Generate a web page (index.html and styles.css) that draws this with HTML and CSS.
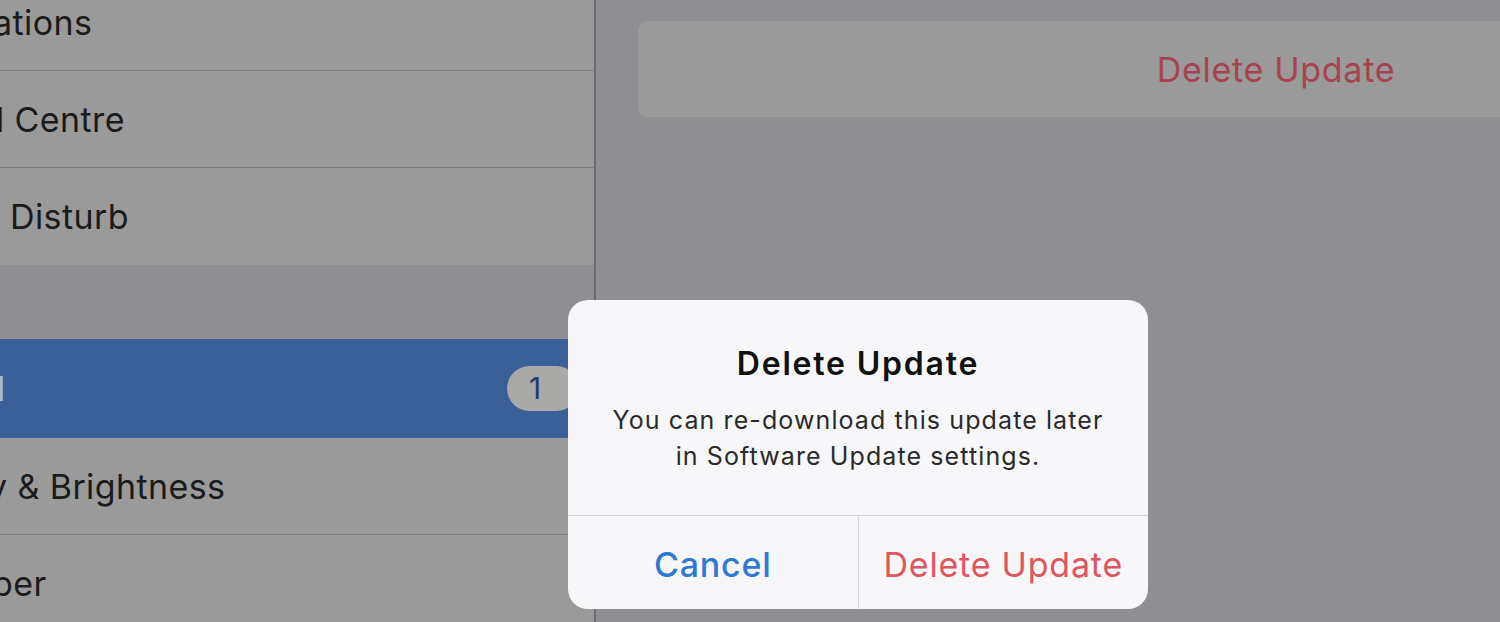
FILE: index.html
```html
<!DOCTYPE html>
<html lang="en">
<head>
    <meta charset="UTF-8">
    <meta name="viewport" content="width=device-width, initial-scale=1.0">
    <title>Settings - Delete Update</title>
    <link rel="stylesheet" href="styles.css">
</head>
<body>
    <div class="screen">
        <!-- Settings list (scrolled, cut off on the left) -->
        <div class="sidebar">
            <div class="list">
                <div class="row"><span class="label l-notif">ations</span></div>
                <div class="row"><span class="label l-control">l Centre</span></div>
                <div class="row last"><span class="label l-dnd">Disturb</span></div>
                <div class="group-gap"></div>
                <div class="row selected">
                    <span class="label l-general">l</span>
                    <span class="badge">1</span>
                </div>
                <div class="row"><span class="label l-display">y &amp; Brightness</span></div>
                <div class="row last"><span class="label l-wall">per</span></div>
            </div>
        </div>

        <!-- Detail pane -->
        <div class="detail">
            <div class="card">
                <span class="card-action">Delete Update</span>
            </div>
        </div>

        <!-- Alert -->
        <div class="alert">
            <div class="alert-body">
                <h3>Delete Update</h3>
                <p>You can re-download this update later<br>in Software Update settings.</p>
            </div>
            <div class="alert-buttons">
                <button class="alert-btn cancel">Cancel</button>
                <button class="alert-btn destructive">Delete Update</button>
            </div>
        </div>
    </div>
</body>
</html>
```

FILE: styles.css
```css
* {
    box-sizing: border-box;
}

body {
    margin: 0;
    width: 1500px;
    height: 622px;
    overflow: hidden;
    font-family: Inter, "Noto Sans", "Liberation Sans", sans-serif;
    background: #8f8f93;
}

.screen {
    position: relative;
    display: flex;
    width: 1500px;
    height: 622px;
    overflow: hidden;
}

.sidebar {
    width: 596px;
    flex-shrink: 0;
    background: #8f8f93;
    border-right: 2px solid #6c6c70;
    overflow: hidden;
}

.list {
    margin-top: -26px;
}

.row {
    display: flex;
    align-items: center;
    height: 97px;
    background: #9a9a9a;
    border-bottom: 1px solid #7d7d7f;
    font-size: 34px;
    letter-spacing: 0.4px;
    color: #1b1b1b;
    white-space: nowrap;
}

.row.last {
    border-bottom: none;
}

.group-gap {
    height: 74px;
    background: #8f8f93;
}

.row.selected {
    height: 99px;
    background: #3b5f98;
    color: #a9bcd6;
    border-bottom: none;
    justify-content: space-between;
}

.label {
    display: inline-block;
}

.l-notif { margin-left: -7px; }
.l-control { margin-left: -4px; }
.l-dnd { margin-left: 10px; }
.l-general { margin-left: -3px; }
.l-display { margin-left: -12px; }
.l-wall { margin-left: -8px; }

.badge {
    height: 45px;
    width: 72px;
    padding-left: 22px;
    margin-right: 15px;
    border-radius: 23px;
    background: #a9a9a7;
    color: #243a63;
    font-size: 30px;
    line-height: 45px;
}

.detail {
    flex: 1;
    padding: 21px 0 0 42px;
    overflow: hidden;
}

.card {
    width: 1276px;
    height: 96px;
    border-radius: 10px;
    background: #9a9a9b;
    display: flex;
    align-items: center;
    justify-content: center;
}

.card-action {
    font-size: 34px;
    letter-spacing: 0.7px;
    color: #a6434e;
}

.alert {
    position: absolute;
    left: 568px;
    top: 300px;
    width: 580px;
    height: 309px;
    background: #f7f7f9;
    border-radius: 20px;
    display: flex;
    flex-direction: column;
    overflow: hidden;
}

.alert-body {
    height: 216px;
    padding-top: 45px;
    text-align: center;
    border-bottom: 1px solid #d5d5d8;
}

.alert-body h3 {
    margin: 0;
    font-size: 32px;
    font-weight: 600;
    letter-spacing: 1.8px;
    color: #111;
    line-height: 38px;
}

.alert-body p {
    margin: 19px 0 0;
    font-size: 25px;
    letter-spacing: 1.1px;
    line-height: 36px;
    color: #2a2a2a;
}

.alert-buttons {
    flex: 1;
    display: flex;
}

.alert-btn {
    flex: 1;
    border: none;
    background: transparent;
    font-family: inherit;
    font-size: 34px;
    letter-spacing: 0.8px;
    padding: 4px 0 0;
    cursor: pointer;
}

.alert-btn.cancel {
    color: #2f78d4;
    font-weight: 500;
    border-right: 1px solid #d5d5d8;
}

.alert-btn.destructive {
    color: #df5560;
}
```
